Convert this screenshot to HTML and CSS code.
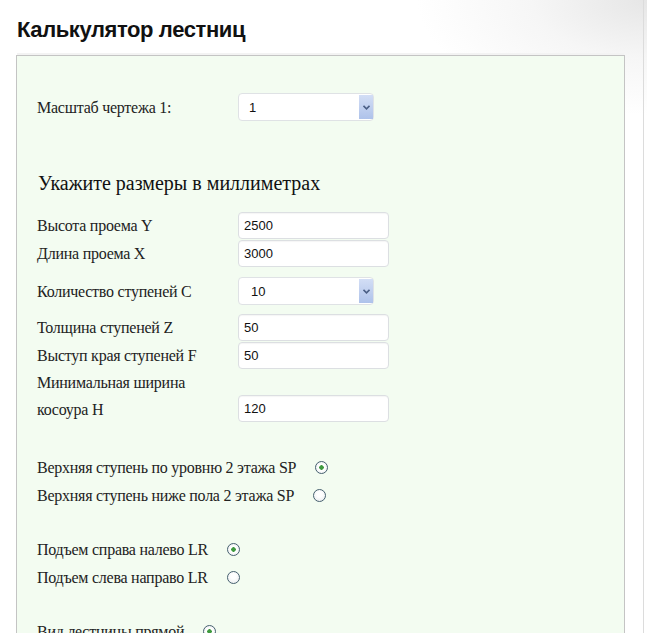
FILE: index.html
```html
<!DOCTYPE html>
<html lang="ru">
<head>
<meta charset="utf-8">
<title>Калькулятор лестниц</title>
<link rel="stylesheet" href="styles.css">
</head>
<body>
<h1 class="title">Калькулятор лестниц</h1>
<div class="box">
  <div class="row row-scale">
    <label class="lbl">Масштаб чертежа 1:</label>
    <div class="sel">
      <select class="sel-input"><option>1</option></select>
      <span class="sel-arrow"><svg width="7" height="5" viewBox="0 0 7 5"><path d="M0.5 0.8 L3.5 3.8 L6.5 0.8" fill="none" stroke="#4b5f86" stroke-width="1.6"/></svg></span>
    </div>
  </div>

  <h2 class="subtitle">Укажите размеры в миллиметрах</h2>

  <div class="row"><label class="lbl">Высота проема Y</label><input class="txt" type="text" value="2500"></div>
  <div class="row"><label class="lbl">Длина проема X</label><input class="txt" type="text" value="3000"></div>
  <div class="row row-sel2">
    <label class="lbl">Количество ступеней C</label>
    <div class="sel">
      <select class="sel-input sel-input2"><option>10</option></select>
      <span class="sel-arrow"><svg width="7" height="5" viewBox="0 0 7 5"><path d="M0.5 0.8 L3.5 3.8 L6.5 0.8" fill="none" stroke="#4b5f86" stroke-width="1.6"/></svg></span>
    </div>
  </div>
  <div class="row row-z"><label class="lbl">Толщина ступеней Z</label><input class="txt" type="text" value="50"></div>
  <div class="row"><label class="lbl">Выступ края ступеней F</label><input class="txt" type="text" value="50"></div>
  <div class="row row-wrap"><label class="lbl">Минимальная ширина<br>косоура H</label><input class="txt" type="text" value="120"></div>

  <div class="group">
    <div class="rrow"><span class="lbl">Верхняя ступень по уровню 2 этажа SP</span><input class="radio" type="radio" name="sp" checked></div>
    <div class="rrow"><span class="lbl">Верхняя ступень ниже пола 2 этажа SP</span><input class="radio" type="radio" name="sp"></div>
  </div>

  <div class="group">
    <div class="rrow"><span class="lbl">Подъем справа налево LR</span><input class="radio" type="radio" name="lr" checked></div>
    <div class="rrow"><span class="lbl">Подъем слева направо LR</span><input class="radio" type="radio" name="lr"></div>
  </div>

  <div class="group">
    <div class="rrow"><span class="lbl">Вид лестницы прямой</span><input class="radio" type="radio" name="v" checked></div>
  </div>
</div>
</body>
</html>
```

FILE: styles.css
```css
html {
  background-color: #ffffff;
  background-image:
    linear-gradient(to right, transparent 643px, #dcdcdc 643px, #dcdcdc 644px, transparent 644px),
    radial-gradient(ellipse 230px 115px at 100% 0, #e6e6e6 0%, rgba(240,240,240,0.6) 50%, rgba(255,255,255,0) 100%);
  background-repeat: no-repeat;
  min-height: 100%;
}
body {
  margin: 0;
  font-family: "Liberation Serif", "Times New Roman", serif;
  color: #222;
}
.title {
  margin: 0;
  padding: 17px 0 0 17px;
  height: 38px;
  box-sizing: border-box;
  font-family: "Liberation Sans Narrow", "Liberation Sans", Arial, sans-serif;
  font-stretch: condensed;
  font-size: 22px;
  font-weight: bold;
  line-height: 26px;
  color: #111;
  letter-spacing: -0.4px;
}
.box {
  margin: 17px 0 0 16px;
  width: 609px;
  box-sizing: border-box;
  min-height: 600px;
  background: #f3fcf1;
  border: 1px solid #c4c4c4;
  border-bottom: none;
  padding: 37px 0 0 20px;
  box-shadow: 0 -3px 0 -1px #f3f3f3;
}
.row {
  display: grid;
  grid-template-columns: 201px 151px;
  align-items: center;
  min-height: 28px;
}
.lbl {
  font-size: 16px;
  line-height: 27px;
  letter-spacing: -0.25px;
  color: #222;
}
.subtitle {
  margin: 48px 0 14px 1px;
  font-size: 20px;
  font-weight: normal;
  line-height: 28px;
  color: #111;
}
.row-sel2 { margin-top: 10px; margin-bottom: 8px; }
.row-wrap { align-items: end; }
.row-wrap .txt { margin-bottom: 1px; }
.txt {
  width: 151px;
  height: 27px;
  box-sizing: border-box;
  border: 1px solid #dcdfe2;
  border-radius: 4px;
  background: #fff;
  box-shadow: inset 0 1px 1px rgba(0,0,0,0.04);
  padding: 0 5px;
  font-family: "Liberation Sans", Arial, sans-serif;
  font-size: 13px;
  color: #111;
  outline: none;
}
.sel {
  position: relative;
  width: 136px;
  height: 28px;
}
.sel-input {
  appearance: none;
  -webkit-appearance: none;
  width: 136px;
  height: 28px;
  box-sizing: border-box;
  border: 1px solid #dfe2e5;
  border-radius: 4px;
  background: #fff;
  padding: 0 0 0 10px;
  font-family: "Liberation Sans", Arial, sans-serif;
  font-size: 13px;
  color: #111;
  outline: none;
}
.sel-input2 { padding-left: 12px; }
.sel-arrow {
  position: absolute;
  top: 2px;
  right: 1px;
  width: 14px;
  height: 24px;
  background: linear-gradient(to bottom, #d3def5, #aec2ea);
  display: flex;
  align-items: center;
  justify-content: center;
}
.group {
  margin-top: 30px;
}
.group + .group { margin-top: 26px; }
.rrow {
  display: flex;
  align-items: center;
  height: 28px;
}
.radio {
  appearance: none;
  -webkit-appearance: none;
  margin: 0 0 0 19px;
  width: 13px;
  height: 13px;
  box-sizing: border-box;
  border: 1px solid #46606f;
  border-radius: 50%;
  background: radial-gradient(circle at 50% 40%, #ffffff 30%, #e4e8ea 100%);
}
.radio:checked {
  background: radial-gradient(circle, #3f9a3f 0 2px, #ffffff 2.5px 40%, #e4e8ea 100%);
}
```
